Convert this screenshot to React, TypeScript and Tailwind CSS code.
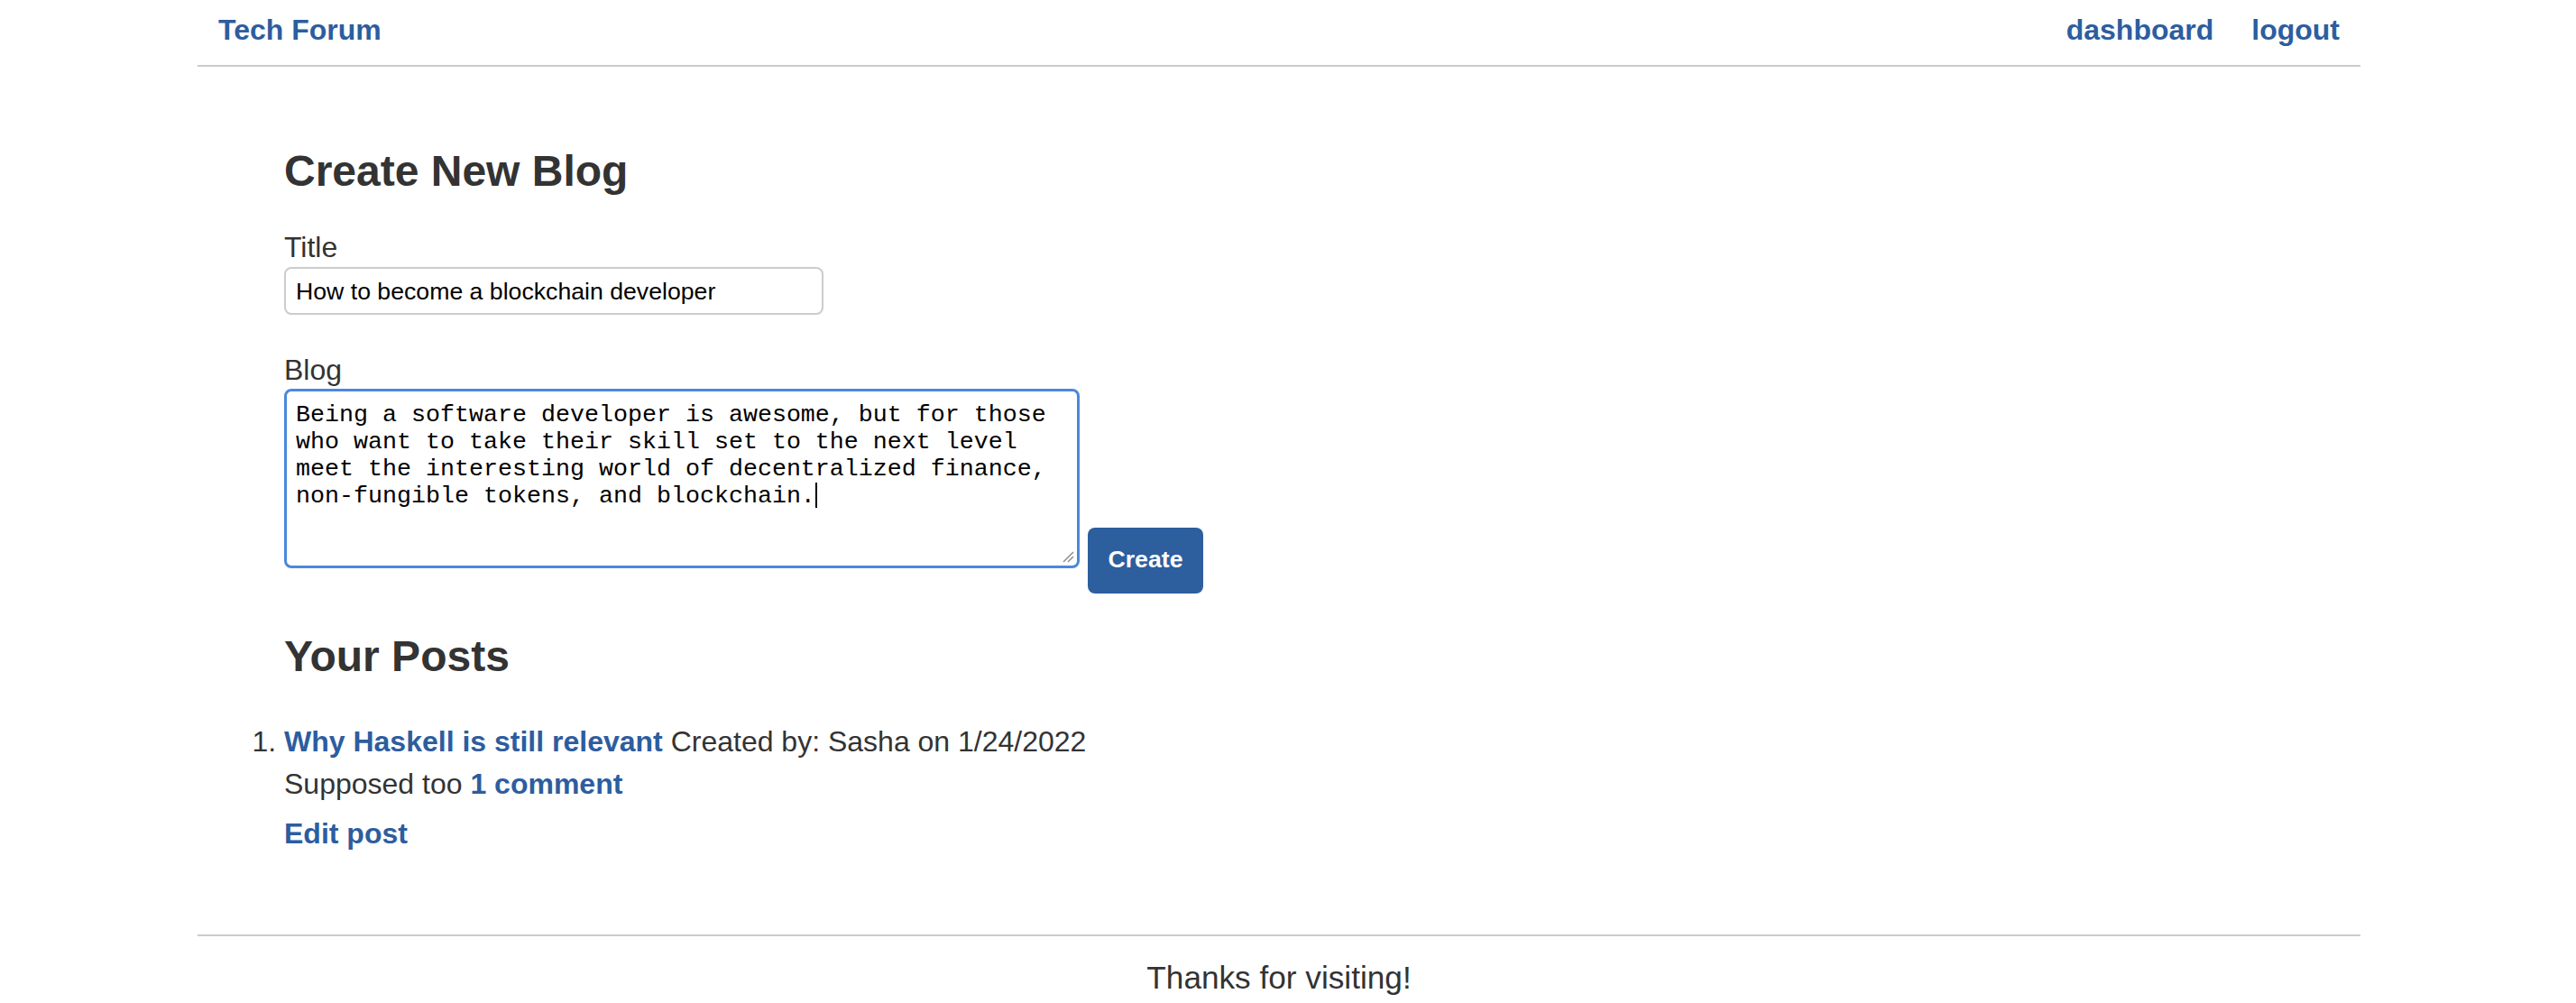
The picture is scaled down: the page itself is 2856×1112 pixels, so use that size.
export default function App() {
  return (
    <div className="min-h-[1112px] bg-white font-['Liberation_Sans',Arial,sans-serif] text-[#333333]">
      <div className="ml-[219px] w-[2398px]">
        <header className="flex h-[74px] items-start justify-between border-b-2 border-[#cccccc] px-[23px] pt-[15px] text-[32px] font-bold leading-[37px] text-[#2d5d9f]">
          <a href="#" className="no-underline">Tech Forum</a>
          <nav className="flex gap-[42px]">
            <a href="#">dashboard</a>
            <a href="#">logout</a>
          </nav>
        </header>

        <main className="pl-[96px]">
          <h2 className="mt-[88px] text-[48px] font-bold leading-[55px]">Create New Blog</h2>
          <form onSubmit={(e) => e.preventDefault()}>
            <label className="mt-[39px] block text-[32px] leading-[37px]">Title</label>
            <input
              readOnly
              value="How to become a blockchain developer"
              className="mt-[3px] block h-[53px] w-[598px] rounded-[8px] border-2 border-[#cccccc] px-[11px] pt-[2px] font-['Liberation_Sans',Arial,sans-serif] text-[26.67px] text-black outline-none"
            />
            <label className="mt-[43px] block text-[32px] leading-[37px]">Blog</label>
            <div className="mt-[2px] flex items-start">
              <div className="relative h-[199px] w-[882px] rounded-[8px] border-[3px] border-[#4a89dc] px-[10px] pt-[11px] font-['Liberation_Mono','Courier_New',monospace] text-[26.67px] leading-[30px] text-black">
                Being a software developer is awesome, but for those
                <br />
                who want to take their skill set to the next level
                <br />
                meet the interesting world of decentralized finance,
                <br />
                non-fungible tokens, and blockchain.
                <span className="inline-block h-[28px] w-[2px] bg-black align-[-6px]" />
                <svg
                  className="absolute bottom-[3px] right-[3px]"
                  width="14"
                  height="14"
                  viewBox="0 0 14 14"
                >
                  <line x1="13" y1="2" x2="2" y2="13" stroke="#8a8a8a" strokeWidth="1.5" />
                  <line x1="13" y1="7" x2="7" y2="13" stroke="#8a8a8a" strokeWidth="1.5" />
                </svg>
              </div>
              <button
                type="submit"
                className="ml-[9px] mt-[154px] flex h-[73px] w-[128px] items-center justify-center rounded-[8px] bg-[#2d5e9e] pb-[3px] text-[26.67px] font-bold text-white"
              >
                Create
              </button>
            </div>
          </form>

          <h2 className="mt-[42px] text-[48px] font-bold leading-[55px]">Your Posts</h2>
          <ol className="mt-[43px] list-decimal text-[32px]">
            <li>
              <div className="leading-[47px]">
                <a href="#" className="font-bold text-[#2d5d9f]">Why Haskell is still relevant</a> Created by: Sasha on 1/24/2022
              </div>
              <div className="leading-[47px]">
                Supposed too <a href="#" className="font-bold text-[#2d5d9f]">1 comment</a>
              </div>
              <div className="mt-[13px] leading-[37px]">
                <a href="#" className="font-bold text-[#2d5d9f]">Edit post</a>
              </div>
            </li>
          </ol>
        </main>

        <footer className="mt-[93px] border-t-2 border-[#cccccc] pt-[26px] text-center text-[35.2px] leading-[40px]">
          Thanks for visiting!
        </footer>
      </div>
    </div>
  );
}
